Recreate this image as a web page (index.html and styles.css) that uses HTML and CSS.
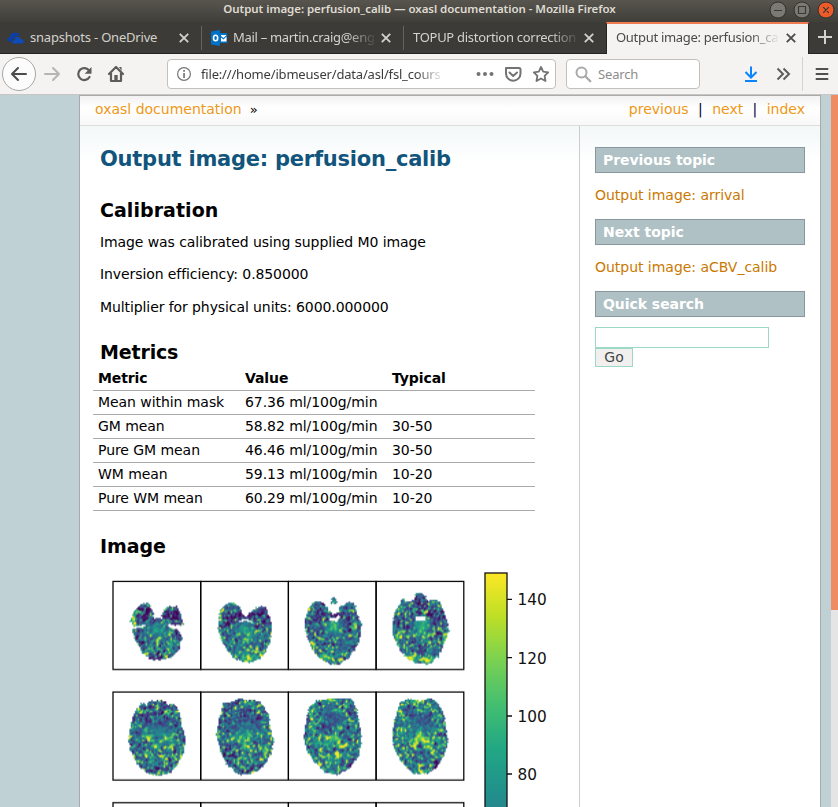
FILE: index.html
```html
<!DOCTYPE html>
<html lang="en">
<head>
<meta charset="utf-8">
<title>Output image: perfusion_calib — oxasl documentation</title>
<link rel="stylesheet" href="styles.css">
</head>
<body>
<div class="window">
  <header class="titlebar">
    <div class="title">Output image: perfusion_calib — oxasl documentation - Mozilla Firefox</div>
    <div class="controls">
      <svg width="66" height="18" viewBox="0 0 66 18"><g stroke="#32312d" stroke-width="1"><circle cx="9" cy="9" r="8" fill="#7b7973"/><circle cx="33" cy="9" r="8" fill="#7b7973"/><circle cx="57" cy="9" r="8" fill="#ec5b29"/></g><g fill="none" stroke="#3a3934" stroke-width="1.2"><path d="M5 9.500h8M29.500 5.500h7v7h-7zM54.200 6.200l5.600 5.600M59.800 6.200l-5.600 5.600"/></g></svg>
    </div>
  </header>
  <nav class="tabs">
    <div class="tab t1"><svg class="fav" width="18" height="12" viewBox="0 0 18 12"><path d="M3 10C-1 10 0 5 3 5C3 2 6 0 8.500 1C11 .5 13 2 13 4C10 3 7 4 7 7C4 7 4 10 5 10Z" fill="#0a3fa8"/><path d="M7 11.500C4 11.500 5 8 7.500 8C8 4 13 4 13.500 7C17 6 18 11.500 15 11.500Z" fill="#0c4bb8"/></svg><span class="label">snapshots - OneDrive</span><svg class="x" viewBox="0 0 10 10"><path d="M.8.8l8.400 8.400M9.200.8L.8 9.200"/></svg></div>
    <div class="tab t2"><svg class="fav" width="17" height="16" viewBox="0 0 17 16"><path d="M0 1.500L9 0v16L0 14.500z" fill="#0072c6"/><path d="M9 3h7v10H9z" fill="#0072c6"/><path d="M10 5h5.500L12.500 8 10 6zM10 7.500l2.500 2L15.500 6.500V11.500H10z" fill="#fff"/><ellipse cx="4.600" cy="8" rx="2.100" ry="2.700" fill="none" stroke="#fff" stroke-width="1.600"/></svg><span class="label fade">Mail – martin.craig@eng</span><svg class="x" viewBox="0 0 10 10"><path d="M.8.8l8.400 8.400M9.200.8L.8 9.200"/></svg></div>
    <div class="tab t3"><span class="label fade">TOPUP distortion correction</span><svg class="x" viewBox="0 0 10 10"><path d="M.8.8l8.400 8.400M9.200.8L.8 9.200"/></svg></div>
    <div class="tab t4"><span class="label fade">Output image: perfusion_ca</span><svg class="x" viewBox="0 0 10 10"><path d="M.8.8l8.400 8.400M9.200.8L.8 9.200"/></svg></div>
    <svg class="plus" width="14" height="14" viewBox="0 0 14 14"><path d="M7 0v14M0 7h14" stroke="#d4d2cc" stroke-width="2"/></svg>
  </nav>
  <div class="toolbar">
    <svg class="navicons" width="167" height="40" viewBox="0 0 167 40">
      <circle cx="19" cy="20" r="16.500" fill="#fcfcfc" stroke="#a9a7a5"/>
      <g fill="none" stroke="#4c4c4c" stroke-width="2" stroke-linecap="round" stroke-linejoin="round">
        <path d="M12 20h14M18 14l-6 6 6 6"/>
        <path d="M45 20h14M53 14l6 6-6 6" stroke="#b6b5b4"/>
      </g>
      <path d="M89.300 16.800A6 6 0 1 0 89.500 23" fill="none" stroke="#5c5c5b" stroke-width="2.200" stroke-linecap="round"/><path d="M91.500 13v6.800h-6.800z" fill="#5c5c5b"/>
      <path d="M109 20l7-7 7 7M111 19v8h10v-8" fill="none" stroke="#5c5c5b" stroke-width="2.200" stroke-linecap="round" stroke-linejoin="round"/><path d="M114.300 27v-6h3.400v6zM119 13h2.500v4z" fill="#5c5c5b"/>
    </svg>
    <div class="urlbar">
      <svg width="14" height="14" viewBox="0 0 14 14"><circle cx="7" cy="7" r="6.400" fill="none" stroke="#777" stroke-width="1.200"/><path d="M6.200 3h1.700v1.700H6.200zM6.200 6h1.700v5H6.200z" fill="#777"/></svg>
      <span class="url">file:///home/ibmeuser/data/asl/fsl_cours</span>
      <svg width="76" height="18" viewBox="0 0 76 18"><g fill="#737373"><circle cx="4.500" cy="9" r="2"/><circle cx="11" cy="9" r="2"/><circle cx="17.500" cy="9" r="2"/></g><path d="M32 3h13q1.500 0 1.500 1.500v4a7.200 7.200 0 0 1-14.500 0V4q0-1 0-1M35.500 7.500l3.700 3.500L43 7.500" fill="none" stroke="#737373" stroke-width="2" stroke-linecap="round" stroke-linejoin="round"/><path d="M67 2l2.200 4.600 5 .7-3.600 3.600.9 5.100-4.500-2.500-4.500 2.500.9-5.100-3.600-3.600 5-.7z" fill="none" stroke="#737373" stroke-width="1.800" stroke-linejoin="round"/></svg>
    </div>
    <div class="searchbar"><svg width="17" height="17" viewBox="0 0 17 17"><circle cx="6.500" cy="6.500" r="5" fill="none" stroke="#a9a9a9" stroke-width="2"/><path d="M10.300 10.300l5 5" stroke="#a9a9a9" stroke-width="2.300" stroke-linecap="round"/></svg><span>Search</span></div>
    <svg class="endicons" width="96" height="40" viewBox="0 0 96 40">
      <path d="M9 12.500v11M3.500 18L9 23.500l5.500-5.500M3 27h12" fill="none" stroke="#0a84ff" stroke-width="2"/>
      <path d="M35.500 14.500l5.500 5.500-5.500 5.500M41.500 14.500l5.500 5.500-5.500 5.500" fill="none" stroke="#5c5c5b" stroke-width="2"/>
      <path d="M60.500 3v34" stroke="#d5d3d1"/>
      <path d="M74.500 15h11M74.500 20h11M74.500 25h11" stroke="#4f4f4e" stroke-width="2" stroke-linecap="round"/>
    </svg>
  </div>

  <div class="viewport">
    <div class="page">
      <div class="related">
        <div><a>oxasl documentation</a><span class="raquo">»</span></div>
        <div class="rellinks"><a>previous</a><i>|</i><a>next</a><i>|</i><a>index</a></div>
      </div>
      <div class="columns">
        <main class="body">
          <h1>Output image: perfusion_calib</h1>
          <h2 class="calib-h">Calibration</h2>
          <p>Image was calibrated using supplied M0 image</p>
          <p>Inversion efficiency: 0.850000</p>
          <p>Multiplier for physical units: 6000.000000</p>
          <h2 class="metrics-h">Metrics</h2>
          <table>
            <thead><tr><th class="c1">Metric</th><th class="c2">Value</th><th>Typical</th></tr></thead>
            <tbody>
              <tr><td>Mean within mask</td><td>67.36 ml/100g/min</td><td></td></tr>
              <tr><td>GM mean</td><td>58.82 ml/100g/min</td><td>30-50</td></tr>
              <tr><td>Pure GM mean</td><td>46.46 ml/100g/min</td><td>30-50</td></tr>
              <tr><td>WM mean</td><td>59.13 ml/100g/min</td><td>10-20</td></tr>
              <tr><td>Pure WM mean</td><td>60.29 ml/100g/min</td><td>10-20</td></tr>
            </tbody>
          </table>
          <h2 class="image-h">Image</h2>
          <div class="figure">
            <canvas id="slices" width="353" height="240"></canvas>
            <svg class="colorbar" width="70" height="250" viewBox="0 0 70 250">
              <defs><linearGradient id="viridis" gradientUnits="userSpaceOnUse" x1="0" y1="1" x2="0" y2="437">
                <stop offset="0" stop-color="#fde725"/><stop offset=".1" stop-color="#bddf26"/><stop offset=".2" stop-color="#7ad151"/><stop offset=".3" stop-color="#44bf70"/><stop offset=".4" stop-color="#22a884"/><stop offset=".5" stop-color="#21918c"/><stop offset=".6" stop-color="#2a788e"/></linearGradient></defs>
              <rect x="1" y="1" width="22" height="300" fill="url(#viridis)" stroke="#111" stroke-width="1.300"/>
              <path d="M23 27.300h5M23 85.600h5M23 144h5M23 202h5" stroke="#111" stroke-width="1.300"/>
              <g class="ticks"><text x="33.500" y="33">140</text><text x="33.500" y="91.500">120</text><text x="33.500" y="150">100</text><text x="33.500" y="208">80</text></g>
            </svg>
          </div>
        </main>
        <aside class="sidebar">
          <h3>Previous topic</h3>
          <p><a>Output image: arrival</a></p>
          <h3>Next topic</h3>
          <p><a>Output image: aCBV_calib</a></p>
          <h3>Quick search</h3>
          <form><input type="text" aria-label="Quick search"><button type="button">Go</button></form>
        </aside>
      </div>
    </div>
    <div class="scrollbar"><div class="thumb"></div></div>
  </div>
</div>
<script src="slices.js"></script>
</body>
</html>
```
FILE: styles.css
```css
* { box-sizing: border-box; }
body { margin: 0; overflow: hidden; }
.window { width: 838px; height: 807px; display: flex; flex-direction: column; overflow: hidden; font-family: "Noto Sans", sans-serif; }
svg { flex: none; display: block; }

.titlebar { height: 22px; flex: none; display: flex; background: linear-gradient(#57554e, #403e39); color: #dfdbd2; font-size: 11.5px; font-weight: 600; }
.title { flex: 1; padding-left: 70px; text-align: center; line-height: 18px; white-space: nowrap; letter-spacing: -.05px; }
.controls { width: 69px; padding-top: 1px; }

.tabs { height: 32px; flex: none; display: flex; background: #3c3b37; color: #d4d2cc; font-size: 13px; letter-spacing: -.2px; border-bottom: 1px solid #252420; }
.tab { display: flex; align-items: center; height: 32px; position: relative; }
.tab::before { content: ""; position: absolute; left: 0; top: 4px; height: 24px; width: 1px; background: #65635e; }
.t1::before, .t4::before { display: none; }
.t1 { width: 201px; padding-left: 7px; }
.t2 { width: 202px; padding-left: 10px; }
.t3 { width: 203px; padding-left: 10px; }
.t4 { width: 203px; padding-left: 9px; background: #f4f3f2; color: #4a4a49; border: 1px solid #252420; border-top: 2px solid #f0794f; border-bottom: 0; }
.fav { margin-right: 5px; }
.label { flex: 1; overflow: hidden; white-space: nowrap; line-height: 20px; margin-top: -2px; }
.t2 .label { letter-spacing: -.3px; }
.t3 .label { letter-spacing: -.28px; }
.t4 .label { letter-spacing: -.3px; margin-top: -4px; }
.fade { -webkit-mask-image: linear-gradient(90deg, #000 calc(100% - 30px), transparent); mask-image: linear-gradient(90deg, #000 calc(100% - 30px), transparent); }
.x { width: 10px; height: 10px; margin: 0 12px 0 6px; fill: none; stroke: currentColor; stroke-width: 1.8; }
.t2 .x, .t3 .x { margin-left: 4px; }
.t4 .x { margin-top: -2px; }
.plus { margin: 8px 0 0 9px; }

.toolbar { height: 40px; flex: none; display: flex; align-items: center; background: #f4f3f2; font-size: 13px; letter-spacing: -.15px; }
.urlbar { width: 389px; height: 30px; border: 1px solid #c2c0bd; border-radius: 4px; background: #fff; display: flex; align-items: center; padding-left: 9px; color: #3c3c3c; }
.url { width: 243px; margin: 0 30px 0 10px; overflow: hidden; white-space: nowrap; letter-spacing: -.18px; -webkit-mask-image: linear-gradient(90deg, #000 215px, transparent); mask-image: linear-gradient(90deg, #000 215px, transparent); }
.searchbar { width: 134px; height: 30px; margin-left: 10px; border: 1px solid #c2c0bd; border-radius: 4px; background: #fff; display: flex; align-items: center; gap: 6px; padding-left: 8px; color: #8c8c8c; }
.endicons { margin-left: auto; }

.viewport { flex: 1; min-height: 0; display: flex; background: #bfd1d4; border-top: 1px solid #c8c6c4; padding-left: 79px; font-family: "DejaVu Sans", sans-serif; font-size: 14px; letter-spacing: -.09px; color: #000; overflow: hidden; }
.page { width: 742px; height: 712px; border: 1px solid #aaa; border-bottom: 0; background: #fff; }
.related { height: 30px; display: flex; justify-content: space-between; padding: 0 15px; line-height: 27px; border-bottom: 1px solid #ddd; background: linear-gradient(#f2f2f2, #fff 12px, #f8f8f8); letter-spacing: 0; }
.related a { color: #ee9816; }
.raquo { margin-left: 8px; font-size: 13px; }
.related i { font-style: normal; margin: 0 9.4px; color: #000033; }
.columns { display: flex; height: 690px; background: linear-gradient(#f3f8f9, #fff 36px); }
.body { width: 500px; padding: 0 20px; border-right: 1px solid #ccc; }
h1, h2, h3, p { margin: 0; }
h1 { padding-top: 17px; font-size: 21px; line-height: 32px; color: #11557c; letter-spacing: -.24px; white-space: nowrap; }
h2 { margin-top: 20px; font-size: 19px; line-height: 30px; letter-spacing: -.15px; }
.calib-h { letter-spacing: .05px; }
.body p { line-height: 21px; margin-bottom: 11.4px; }
.body h2 + p { margin-top: 7px; }
.metrics-h { margin-top: 19px; }
table { margin-left: -7px; width: 442px; border-collapse: collapse; }
th, td { height: 24px; padding: 0 5px; text-align: left; border-bottom: 1px solid #aaa; line-height: 21px; white-space: nowrap; }
td { letter-spacing: -.06px; }
th { letter-spacing: -.1px; }
.c1, .c2 { width: 147px; }
.image-h { margin-top: 20px; letter-spacing: -.05px; }
.figure { display: flex; margin-left: 12px; margin-top: 11px; }
.figure canvas { flex: none; margin-top: 8px; }
.colorbar { margin-left: 19px; }
.ticks { font: 15.3px "DejaVu Sans", sans-serif; letter-spacing: 0; fill: #111; }

.sidebar { width: 240px; padding: 21px 15px 0; letter-spacing: 0; }
h3 { height: 26px; border: 1px solid #86989b; background: #afc1c4; color: #fff; font-size: 14px; line-height: 24px; padding-left: 7px; letter-spacing: -.05px; }
.sidebar p { height: 46px; line-height: 44px; letter-spacing: -.03px; }
.sidebar p a { color: #ca7900; }
form { margin-top: 10px; display: flex; flex-direction: column; align-items: flex-start; }
input { width: 174px; height: 21px; border: 1px solid #9cd8c6; background: #fff; }
button { width: 38px; height: 19px; padding: 0; border: 1px solid #9cd8c6; background: #f1f0ef; color: #444; font: 14px/17px "DejaVu Sans", sans-serif; }
.scrollbar { width: 7px; margin-left: 10px; background: #e5e5e5; }
.thumb { height: 515px; background: #f08c64; }
```
FILE: slices.js
```js
// Draws the perfusion slices as a 4-column grid of 64x64 voxel maps.
// Outlines and features use a 262-unit square per slice.
const VIRIDIS = [[68,1,84],[72,36,117],[65,68,135],[53,95,141],[42,120,142],[33,145,140],[34,168,132],[68,191,112],[122,209,81],[189,223,38],[253,231,37]];
function colour(t) {
  t = Math.max(0, Math.min(0.9999, t)) * 10;
  const i = Math.floor(t), f = t - i;
  return VIRIDIS[i].map((v, k) => v + (VIRIDIS[i + 1][k] - v) * f);
}
let seed = 7;
function rnd() { seed = (seed * 1664525 + 1013904223) % 4294967296; return seed / 4294967296; }

// blobs: [x, y, radiusX, radiusY, amount]; calm: region of low noise
const SLICES = [
  { base: .36, polys: [
      [81,69,106,67,121,91,123,118,111,128,91,133,64,138,52,121,62,96],
      [164,76,191,76,203,96,212,133,176,131,149,126,145,101],
      [117,113,150,113,150,121,117,121],
      [58,144,91,137,111,121,136,115,161,125,171,142,195,144,208,171,200,201,176,228,146,236,114,236,88,216,68,181]],
    holes: [], calm: [135,145,42,26],
    blobs: [[100,100,24,30,-.3],[178,103,30,32,-.29],[60,112,8,24,.4],[134,145,42,24,.14],[133,187,5,15,.5],[80,200,20,25,-.14],[135,234,40,9,-.25],[202,180,8,35,-.2],[170,195,10,20,.2]] },
  { base: .42, polys: [[60,85,75,70,90,66,115,76,125,98,135,104,150,96,165,80,185,76,197,80,205,105,214,125,214,150,209,180,197,210,177,232,150,245,130,242,105,234,78,207,60,172,52,140,55,110]],
    holes: [[111,125,117,118,135,113,153,121,158,128,148,123,134,119,119,124]], calm: [135,142,34,24],
    blobs: [[88,112,36,37,-.27],[180,110,34,34,-.27],[135,104,25,10,-.3],[134,145,34,26,.14],[145,230,18,12,.45],[60,110,5,15,.6],[118,195,22,18,.08]] },
  { base: .39, polys: [[65,72,85,60,105,66,120,88,133,100,148,95,155,76,185,63,202,75,207,100,219,130,217,165,202,200,180,232,150,250,120,247,88,227,66,195,53,160,48,130,55,97]],
    holes: [[122,110,137,112,151,103,154,109,145,122,126,119]], calm: [135,137,26,22],
    extra: [[128,68,132,49,140,49,148,68],[150,65,155,65,155,70,150,70]],
    blobs: [[135,102,25,12,-.28],[90,115,28,32,-.15],[175,115,28,32,-.15],[137,138,22,20,.25],[114,226,14,9,.55],[140,210,45,25,.07]] },
  { base: .4, polys: [[73,65,80,50,92,62,113,58,117,42,130,35,147,42,154,60,175,58,192,60,199,80,214,120,218,150,207,185,187,225,160,247,125,247,93,234,68,200,52,165,48,130,57,90]],
    holes: [[120,107,149,107,149,118,120,118]], calm: [135,138,24,24],
    blobs: [[133,75,20,35,-.24],[90,130,26,34,-.13],[180,125,26,34,-.16],[136,137,21,24,.28],[98,229,24,9,.6],[156,237,18,8,.6],[63,170,8,28,.28],[208,180,7,20,.25]] },
  { base: .37, polys: [[85,33,100,38,115,26,150,26,165,38,185,38,202,70,207,100,217,140,214,175,197,215,172,242,140,250,103,244,73,217,53,175,47,140,53,95,65,60]],
    holes: [], calm: [133,112,42,30],
    blobs: [[128,77,45,28,-.14],[106,136,10,7,.42],[118,146,10,7,.42],[160,140,9,6,.36],[147,148,9,6,.4],[133,163,9,10,.42],[133,55,3,25,.35],[112,197,10,18,.35],[152,205,11,14,.2],[133,125,48,16,.12],[172,158,5,12,.35]] },
  { base: .39, polys: [[70,33,100,28,120,20,145,26,175,26,192,50,207,75,210,110,219,140,212,185,187,225,155,245,113,247,78,217,58,175,47,135,55,80]],
    holes: [], calm: [132,110,42,34],
    blobs: [[128,78,48,30,-.15],[133,135,44,20,.2],[195,181,8,20,.6],[138,163,12,11,.35],[90,194,34,20,-.12],[130,195,7,18,.25],[112,214,8,6,.4]] },
  { base: .44, polys: [[86,25,130,20,192,23,207,60,214,100,220,140,212,190,182,230,150,247,113,242,78,210,53,170,46,135,53,80,63,45]],
    holes: [], calm: [135,85,40,32],
    blobs: [[132,85,45,34,-.18],[122,24,18,6,.5],[142,56,12,4,.42],[139,139,17,14,.3],[108,155,22,10,.2],[172,160,20,5,.35],[120,191,12,5,.4],[195,224,18,17,-.4],[70,76,9,30,.15],[150,200,6,22,.25]] },
  { base: .43, polys: [[72,32,100,22,133,27,165,20,190,40,205,75,210,110,216,140,207,185,184,225,155,244,113,245,76,210,56,175,48,140,55,80]],
    holes: [], calm: [132,95,42,38],
    blobs: [[132,82,45,32,-.16],[130,128,8,14,.5],[121,143,8,11,.5],[140,143,8,11,.5],[114,154,8,7,.45],[150,153,9,8,.45],[158,165,14,6,.35],[132,56,12,4,.4],[125,25,30,6,.4],[120,239,35,7,.25],[180,222,15,15,-.4],[90,110,20,45,.08],[175,110,20,45,.08]] }
];
function inside(p, x, y) {
  let hit = false;
  for (let i = 0, j = p.length - 2; i < p.length; j = i, i += 2) {
    if ((p[i + 1] > y) !== (p[j + 1] > y) && x < (p[j] - p[i]) * (y - p[i + 1]) / (p[j + 1] - p[i + 1]) + p[i]) hit = !hit;
  }
  return hit;
}
function drawSlice(s) {
  const c = document.createElement('canvas'), n = 64;
  c.width = c.height = n;
  const g = c.getContext('2d'), im = g.createImageData(n, n), raw = [];
  const polys = s.polys.concat(s.extra || []);
  for (let i = 0; i < n * n; i++) raw.push(rnd() + rnd() + rnd() - 1.5);
  for (let r = 0; r < n; r++) for (let q = 0; q < n; q++) {
    const x = (q + .5) * 4.1, y = (r + .5) * 4.1, k = r * n + q;
    const jx = x + (rnd() - .5) * 4, jy = y + (rnd() - .5) * 4;
    if (!polys.some(p => inside(p, jx, jy)) || s.holes.some(p => inside(p, x, y))) continue;
    let noise = (raw[k] * .55 + (raw[k - 1] || 0) * .35 + (raw[k - n] || 0) * .45 + (raw[k - n - 1] || 0) * .2) * .4;
    if (noise > .17) noise *= 1.75;
    const [cx, cy, cw, ch] = s.calm;
    noise *= 1 - .75 * Math.exp(-(((x - cx) / cw) ** 2 + ((y - cy) / ch) ** 2));
    let v = s.base + noise;
    for (const [bx, by, bw, bh, a] of s.blobs) v += a * Math.exp(-(((x - bx) / bw) ** 2 + ((y - by) / bh) ** 2));
    const [R, G, B] = colour(v);
    im.data.set([R, G, B, 255], k * 4);
  }
  g.putImageData(im, 0, 0);
  return c;
}
const ctx = document.getElementById('slices').getContext('2d');
ctx.strokeStyle = '#000';
ctx.lineWidth = 1.25;
SLICES.forEach((s, i) => ctx.drawImage(drawSlice(s), 1 + (i % 4) * 87.7, .6 + Math.floor(i / 4) * 110, 87.5, 87.5));
for (let row = 0; row < 3; row++) for (let col = 0; col < 4; col++) ctx.strokeRect(1 + col * 87.7, 1.4 + row * 109.7, 87.7, 87.3);
```
